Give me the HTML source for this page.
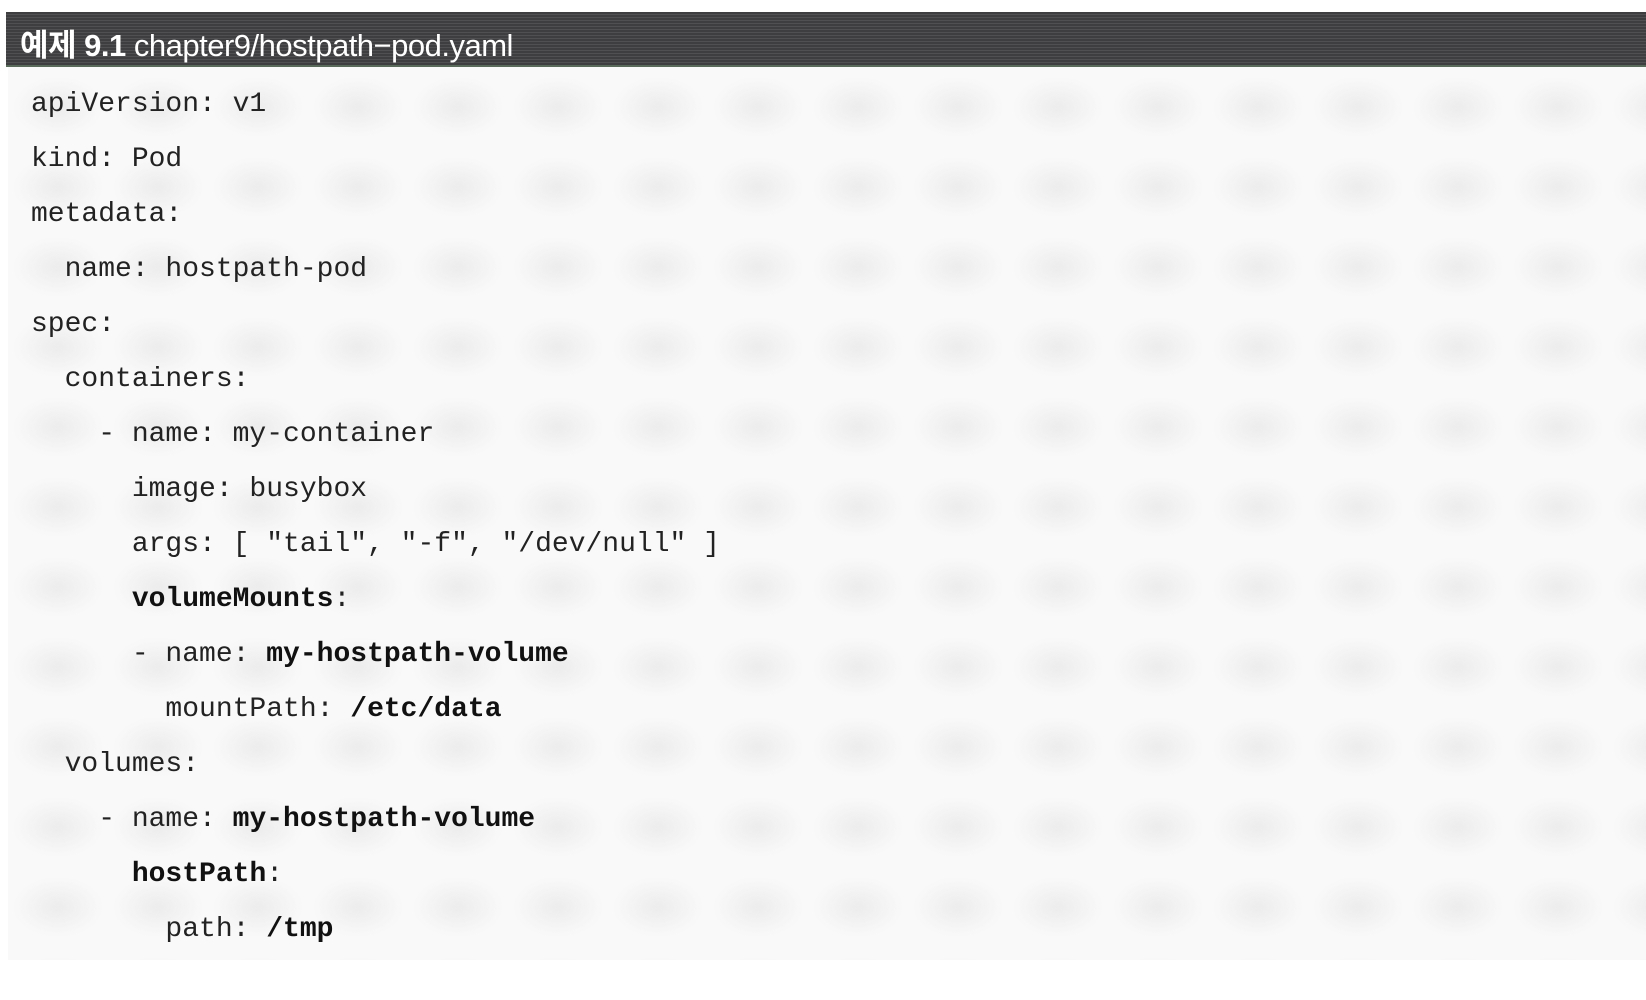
<!DOCTYPE html>
<html><head><meta charset="utf-8"><style>
html,body{margin:0;padding:0;width:1646px;height:1000px;background:#fff;overflow:hidden}
.hdr{position:absolute;left:6px;top:12px;width:1640px;height:53px;background:repeating-linear-gradient(180deg,#3e3e40 0 2px,#505052 2px 3px);border-bottom:2px solid #5a6a5a}
.hdr span{position:absolute;left:14px;top:8px;color:#fff;font-family:"Liberation Sans","Noto Sans CJK KR",sans-serif;font-size:31px;letter-spacing:-0.5px;white-space:nowrap}
.bg{position:absolute;left:8px;top:67px;width:1638px;height:893px;background-color:#f9f9f9;background-image:radial-gradient(ellipse 45px 30px at 50% 50%,#ececec,rgba(249,249,249,0));background-size:100px 80px}
pre{position:absolute;left:31px;top:77px;margin:0;font-family:"Liberation Mono",monospace;font-size:28px;line-height:55px;color:#222}
b{font-weight:bold;color:#111}
</style></head><body>
<div class="hdr"><span><b style="color:#fff">예제 9.1</b> chapter9/hostpath−pod.yaml</span></div>
<div class="bg"></div>
<pre>apiVersion: v1
kind: Pod
metadata:
  name: hostpath-pod
spec:
  containers:
    - name: my-container
      image: busybox
      args: [ "tail", "-f", "/dev/null" ]
      <b>volumeMounts</b>:
      - name: <b>my-hostpath-volume</b>
        mountPath: <b>/etc/data</b>
  volumes:
    - name: <b>my-hostpath-volume</b>
      <b>hostPath</b>:
        path: <b>/tmp</b></pre>
</body></html>
